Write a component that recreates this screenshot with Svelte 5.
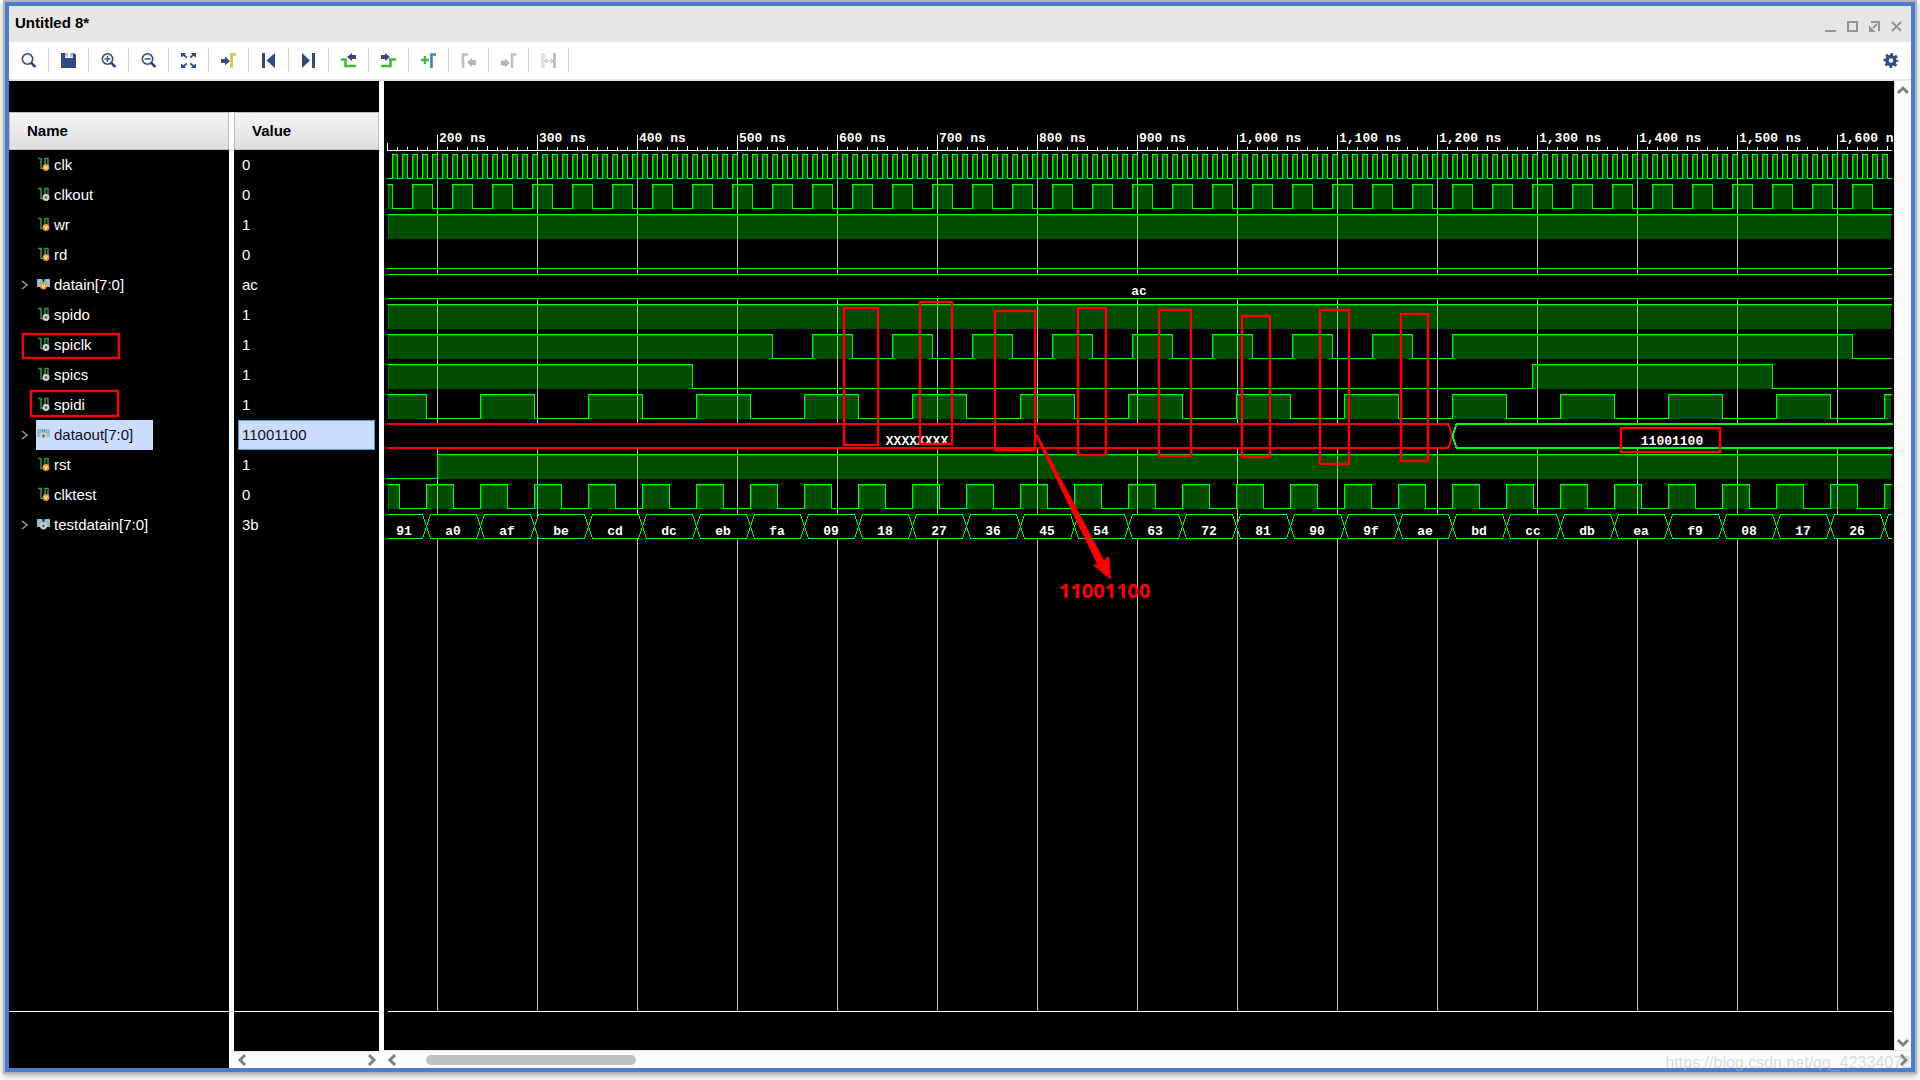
<script lang="ts">
	type Span = [number, number];

	interface Segment {
		from: number;
		to: number;
		label: string;
		labelAt?: number;
		undefinedValue?: boolean;
	}

	interface Signal {
		name: string;
		value: string;
		kind: 'input' | 'output';
		high?: Span[];
		bus?: Segment[];
		bold?: boolean;
		selected?: boolean;
	}

	interface Tool {
		id: string;
		label: string;
		disabled?: boolean;
	}

	// time axis: one pixel per nanosecond
	const START = 150;
	const STOP = 4000;
	const INSET = 3;
	const RULER_Y = 69;
	const ROW_H = 30;
	const WAVE_H = 24;

	const busValues = [
		'91', 'a0', 'af', 'be', 'cd', 'dc', 'eb', 'fa', '09', '18', '27', '36', '45', '54', '63',
		'72', '81', '90', '9f', 'ae', 'bd', 'cc', 'db', 'ea', 'f9', '08', '17', '26', ''
	];

	const tools: Tool[] = [
		{ id: 'search', label: 'Search' },
		{ id: 'save', label: 'Save waveform' },
		{ id: 'zoom-in', label: 'Zoom in' },
		{ id: 'zoom-out', label: 'Zoom out' },
		{ id: 'fit', label: 'Zoom fit' },
		{ id: 'cursor', label: 'Go to cursor' },
		{ id: 'first', label: 'Go to time 0' },
		{ id: 'last', label: 'Go to last time' },
		{ id: 'prev', label: 'Previous transition' },
		{ id: 'next', label: 'Next transition' },
		{ id: 'add', label: 'Add marker' },
		{ id: 'prev-marker', label: 'Previous marker', disabled: true },
		{ id: 'next-marker', label: 'Next marker', disabled: true },
		{ id: 'swap', label: 'Swap cursors', disabled: true }
	];

	function clock(first: number, period: number, width: number, until = STOP): Span[] {
		const spans: Span[] = [];
		for (let t = first; t < until; t += period) spans.push([t, t + width]);
		return spans;
	}

	const signals: Signal[] = [
		{ name: 'clk', value: '0', kind: 'input', high: clock(155, 10, 5) },
		{ name: 'clkout', value: '0', kind: 'output', high: clock(135, 40, 20) },
		{ name: 'wr', value: '1', kind: 'input', high: [[0, STOP]] },
		{ name: 'rd', value: '0', kind: 'input', high: [] },
		{ name: 'datain[7:0]', value: 'ac', kind: 'input', bus: [{ from: 0, to: STOP, label: 'ac', labelAt: 902 }] },
		{ name: 'spido', value: '1', kind: 'output', high: [[0, STOP]] },
		{ name: 'spiclk', value: '1', kind: 'output', high: [[0, 535], ...clock(575, 80, 40, 1200), [1215, 1615]] },
		{ name: 'spics', value: '1', kind: 'output', high: [[0, 455], [1295, 1535]] },
		{ name: 'spidi', value: '1', kind: 'output', high: clock(135, 108, 54) },
		{
			name: 'dataout[7:0]',
			value: '11001100',
			kind: 'output',
			bold: true,
			selected: true,
			bus: [
				{ from: 0, to: 1215, label: 'XXXXXXXX', labelAt: 680, undefinedValue: true },
				{ from: 1215, to: STOP, label: '11001100', labelAt: 1435 }
			]
		},
		{ name: 'rst', value: '1', kind: 'input', high: [[200, STOP]] },
		{ name: 'clktest', value: '0', kind: 'input', high: clock(135, 54, 27) },
		{
			name: 'testdatain[7:0]',
			value: '3b',
			kind: 'output',
			bus: busValues.map((label, i) => ({
				from: 135 + i * 54,
				to: 189 + i * 54,
				label,
				labelAt: i === 0 ? 167 : 162 + i * 54
			}))
		}
	];

	let width = $state(1510);
	let height = $state(969);

	const endX = $derived(width - 3);
	const floorY = $derived(height - 39);
	const ticks = $derived(
		Array.from({ length: Math.floor((endX - INSET) / 10) + 1 }, (_, i) => START + i * 10)
	);
	const majors = $derived(ticks.filter((t) => t % 100 === 0));

	const xOf = (t: number) => Math.min(Math.max(t - START + INSET, INSET), endX);
	const topOf = (row: number) => RULER_Y + 4 + row * ROW_H;

	function visible(spans: Span[]): Span[] {
		return spans
			.map(([a, b]): Span => [xOf(a), xOf(b)])
			.filter(([a, b]) => b > a);
	}

	function tracePath(spans: Span[], row: number): string {
		const hi = topOf(row);
		const lo = hi + WAVE_H;
		let d = '';
		let x = INSET;
		for (const [a, b] of visible(spans)) {
			if (a > x) d += `M${x} ${lo}H${a}V${hi}`;
			else d += `M${a} ${hi}`;
			d += `H${b}`;
			if (b < endX) d += `V${lo}`;
			x = b;
		}
		if (x < endX) d += `M${x} ${lo}H${endX}`;
		return d;
	}

	function busPath(seg: Segment, row: number): string {
		const hi = topOf(row);
		const lo = hi + WAVE_H;
		const mid = hi + WAVE_H / 2;
		const a = xOf(seg.from);
		const b = xOf(seg.to);
		const left = a > INSET ? `M${a + 4} ${lo}L${a} ${mid}L${a + 4} ${hi}` : `M${a} ${hi}`;
		if (b < endX) return `${left}H${b - 4}L${b} ${mid}L${b - 4} ${lo}H${a > INSET ? a + 4 : a}`;
		return `${left}H${b}M${b} ${lo}H${a > INSET ? a + 4 : a}`;
	}

	function busMask(seg: Segment, row: number): string {
		const hi = topOf(row);
		const lo = hi + WAVE_H;
		const mid = hi + WAVE_H / 2;
		const a = xOf(seg.from);
		const b = xOf(seg.to);
		return `${a},${mid} ${a + 4},${hi} ${b - 4},${hi} ${b},${mid} ${b - 4},${lo} ${a + 4},${lo}`;
	}

	const sampleMarks = [
		{ x: 460, y: 227, w: 34, h: 137 },
		{ x: 536, y: 221, w: 32, h: 142 },
		{ x: 611, y: 230, w: 40, h: 139 },
		{ x: 694, y: 227, w: 28, h: 147 },
		{ x: 775, y: 229, w: 32, h: 146 },
		{ x: 858, y: 235, w: 28, h: 141 },
		{ x: 936, y: 229, w: 29, h: 154 },
		{ x: 1017, y: 233, w: 27, h: 147 },
		{ x: 1237, y: 347, w: 99, h: 24 }
	];
</script>

{#snippet toolIcon(id: string)}
	<svg class="icon" viewBox="0 0 16 16" fill="none">
		{#if id === 'search' || id === 'zoom-in' || id === 'zoom-out'}
			<circle cx="6.500" cy="7" r="5.200" stroke="#2f4b82" stroke-width="1.600" />
			<path d="M10.200 10.800l4.200 4.200" stroke="#2f4b82" stroke-width="2.600" />
			{#if id !== 'search'}
				<path d="M3.500 7h6" stroke="#2f4b82" stroke-width="1.400" />
			{/if}
			{#if id === 'zoom-in'}
				<path d="M6.500 4v6" stroke="#2f4b82" stroke-width="1.400" />
			{/if}
		{:else if id === 'save'}
			<path d="M0 1h4v5h8V1h1l2 2v13H0z" fill="#2f4b82" />
			<path d="M4 1h3v4H4zM9 1h3v4H9z" fill="#b9c3d6" />
		{:else if id === 'fit'}
			<path d="M0 1h5L3.700 2.400l2.600 2.600-1.300 1.300-2.600-2.600L1 5H0zM15 1h-5l1.300 1.400L8.700 5 10 6.300l2.600-2.600L14 5h1zM0 16h5l-1.300-1.400 2.600-2.600L5 10.700l-2.600 2.600L1 12H0zM15 16h-5l1.300-1.400L8.700 12l1.300-1.300 2.600 2.600L14 12h1z" fill="#2f4b82" />
		{:else if id === 'cursor'}
			<path d="M0 7h4V4.500L9 9l-5 4.500V11H0z" fill="#2f4b82" />
			<path d="M10.500 16V2.500H15" stroke="#e0c35a" stroke-width="3" />
		{:else if id === 'first'}
			<path d="M1 1h3v15H1zM14 1v15L5.500 8.500z" fill="#2f4b82" />
		{:else if id === 'last'}
			<path d="M11 1h3v15h-3zM1 1v15l8-7.500z" fill="#2f4b82" />
		{:else if id === 'prev'}
			<path d="M0 7.500h4.500v6.500H15" stroke="#48b53c" stroke-width="2.600" />
			<path d="M15 3h-4V1L6 5l5 4V7h4z" fill="#2f4b82" />
		{:else if id === 'next'}
			<path d="M0 14h9.500V7.500H15" stroke="#48b53c" stroke-width="2.600" />
			<path d="M0 3h4V1l5 4-5 4V7H0z" fill="#2f4b82" />
		{:else if id === 'add'}
			<path d="M0 8h8M4 4v8" stroke="#48b53c" stroke-width="2.400" />
			<path d="M10.500 16V2.500H15" stroke="#3b86b8" stroke-width="2.600" />
		{:else if id === 'prev-marker'}
			<path d="M2 16V2.500h5" stroke="#c0c0c0" stroke-width="2.600" />
			<path d="M15 8h-4V6l-5 4.500 5 4.500v-2h4z" fill="#b4b4b4" />
		{:else if id === 'next-marker'}
			<path d="M0 8.500h4v-2L9 11l-5 4.500v-2H0z" fill="#b4b4b4" />
			<path d="M11 16V2.500h4.500" stroke="#c0c0c0" stroke-width="2.600" />
		{:else if id === 'swap'}
			<path d="M1 2h2v13H1z" stroke="#c0c0c0" />
			<path d="M12 1h3v15h-3z" fill="#c0c0c0" />
			<path d="M4 9h8M6.500 6.500L4 9l2.500 2.500M9.500 6.500L12 9l-2.500 2.500" stroke="#b4b4b4" />
		{/if}
	</svg>
{/snippet}

{#snippet badge(kind: string, x: number, y: number)}
	{#if kind === 'input'}
		<circle cx={x} cy={y} r="3.400" fill="#f39424" />
		<path d="M{x - 1.5} {y - 1.5}l1.500 3 1.500-3" fill="none" stroke="#fff" />
	{:else}
		<circle cx={x} cy={y} r="3.400" fill="#d2d2d2" />
		<circle cx={x} cy={y} r="1.400" fill="#666" />
	{/if}
{/snippet}

{#snippet chevron(d: string)}
	<svg class="chevron" viewBox="0 0 14 14" fill="none" stroke="#808080" stroke-width="3">
		<path {d} />
	</svg>
{/snippet}

<div class="window">
	<header class="titlebar">
		<h1>Untitled 8*</h1>
		<div class="window-controls">
			<button type="button" aria-label="Minimize">
				<svg viewBox="0 0 12 12"><path d="M0 10h11" /></svg>
			</button>
			<button type="button" aria-label="Maximize">
				<svg viewBox="0 0 12 12"><path d="M1 1h9v9H1z" /></svg>
			</button>
			<button type="button" aria-label="Float">
				<svg viewBox="0 0 12 12"><path d="M2 1h8v9M8 3L4 7" /><path class="solid" d="M0 4.500V11h6.500z" /></svg>
			</button>
			<button type="button" aria-label="Close">
				<svg viewBox="0 0 12 12"><path d="M1 1l9 9M10 1l-9 9" /></svg>
			</button>
		</div>
	</header>

	<div class="toolbar">
		{#each tools as tool (tool.id)}
			<button type="button" class="tool" aria-label={tool.label} disabled={tool.disabled}>
				{@render toolIcon(tool.id)}
			</button>
		{/each}
		<button type="button" class="tool settings" aria-label="Settings">
			<svg class="icon" viewBox="0 0 16 16" fill="none" stroke="#2f4b82">
				<circle cx="8" cy="8.500" r="4" stroke-width="3.400" />
				<circle cx="8" cy="8.500" r="6.300" stroke-width="2.400" stroke-dasharray="2.600 2.348" stroke-dashoffset="1.300" />
			</svg>
		</button>
	</div>

	<main class="workspace">
		<section class="objects">
			<div class="strip"></div>
			<table>
				<thead>
					<tr>
						<th class="name-col" scope="col">Name</th>
						<th scope="col">Value</th>
					</tr>
				</thead>
				<tbody>
					{#each signals as signal (signal.name)}
						<tr class:selected={signal.selected}>
							<td class="name-col">
								<div class="name-cell">
									<span class="expander">
										{#if signal.bus}
											<button type="button" aria-label="Expand {signal.name}">
												<svg viewBox="0 0 8 10" fill="none" stroke="#9a9a9a" stroke-width="1.600">
													<path d="M1 1l5 4-5 4" />
												</svg>
											</button>
										{/if}
									</span>
									<span class="signal">
										<svg class="signal-icon" viewBox="0 0 13 14">
											{#if signal.bus}
												<path d="M0 2h5l1.500 4L8 2h5v8h-3L6.500 12 3 10H0z" fill="#94bdd2" />
												<path d="M5 2l1.500 4L8 2" fill="none" stroke="#5f7f8e" />
												{@render badge(signal.kind, 6.5, 9)}
											{:else}
												<path d="M1 1.500h3v10h4v-10h3v7" fill="none" stroke="#2e9a45" stroke-width="1.500" />
												{@render badge(signal.kind, 9, 10.5)}
											{/if}
										</svg>
										{signal.name}
									</span>
								</div>
							</td>
							<td><div class="value-cell">{signal.value}</div></td>
						</tr>
					{/each}
				</tbody>
			</table>
			<div class="below">
				<div class="below-name"><div class="void"></div><div class="void-foot"></div></div>
				<div class="below-value">
					<div class="void"></div>
					<div class="void-foot"></div>
					<div class="scrollbar">
						<button type="button" aria-label="Scroll values left">{@render chevron('M9 2L4 7l5 5')}</button>
						<button type="button" aria-label="Scroll values right">{@render chevron('M6 2l5 5-5 5')}</button>
					</div>
				</div>
			</div>
			<svg class="overlay" aria-hidden="true">
				<rect class="mark" x="14" y="253" width="96" height="24" />
				<rect class="mark" x="22" y="310" width="87" height="25" />
			</svg>
		</section>

		<section class="waves">
			<div class="plot" bind:clientWidth={width} bind:clientHeight={height}>
				<svg class="canvas">
					<g class="crisp" transform="translate(0.5 0.5)">
						{#each majors as t (t)}
							<path class="grid" d="M{xOf(t)} {RULER_Y + 1}V{floorY}" />
						{/each}

						{#each ticks as t (t)}
							<path
								class="ruler"
								d="M{xOf(t)} {RULER_Y}V{t % 100 === 0 ? RULER_Y - 16 : t === START ? RULER_Y - 8 : t % 50 === 0 ? RULER_Y - 5 : RULER_Y - 4}"
							/>
						{/each}
						<path class="ruler" d="M{INSET} {RULER_Y}H{endX}" />
						<path class="ruler" d="M{INSET} {floorY}H{endX}" />

						{#each signals as signal, row (signal.name)}
							{#if signal.high}
								{#each visible(signal.high) as [a, b] (a)}
									<rect class="fill" x={a + 0.5} y={topOf(row) + 0.5} width={b - a - 1} height={WAVE_H} />
									<path class="shade" d="M{a + 1} {topOf(row) + WAVE_H}V{topOf(row) + 1}H{b}" />
								{/each}
								<path class="trace" d={tracePath(signal.high, row)} />
							{:else if signal.bus}
								<g transform={signal.bold ? 'translate(0 -0.5)' : undefined}>
									{#each signal.bus as seg (seg.from)}
										{#if xOf(seg.from) < endX}
											<polygon class="bus-mask" points={busMask(seg, row)} />
											<path
												class="trace"
												class:bold={signal.bold}
												class:undefined-value={seg.undefinedValue}
												d={busPath(seg, row)}
											/>
										{/if}
									{/each}
								</g>
							{/if}
						{/each}
					</g>

					{#each majors as t (t)}
						<text class="label" x={xOf(t) + 2} y={RULER_Y - 8}>{t.toLocaleString('en-US')} ns</text>
					{/each}
					{#each signals as signal, row (signal.name)}
						{#each signal.bus ?? [] as seg (seg.from)}
							<text class="label centered" x={xOf(seg.labelAt ?? seg.from)} y={topOf(row) + 21}>{seg.label}</text>
						{/each}
					{/each}

					{#each sampleMarks as mark (mark.x)}
						<rect class="mark" x={mark.x} y={mark.y} width={mark.w} height={mark.h} />
					{/each}
					<polygon class="arrow" points="652,353 654,354 720,479 725,475 727,499 709,484 713,483 652,356" />
					<text class="note" x="675" y="517">11001100</text>
				</svg>
			</div>
			<div class="scrollbar vertical">
				<button type="button" aria-label="Scroll up">{@render chevron('M2 10l5-5 5 5')}</button>
				<button type="button" aria-label="Scroll down">{@render chevron('M2 6l5 5 5-5')}</button>
			</div>
			<div class="scrollbar horizontal">
				<button type="button" aria-label="Scroll left">{@render chevron('M9 2L4 7l5 5')}</button>
				<div class="track"><div class="thumb"></div></div>
				<button type="button" aria-label="Scroll right">{@render chevron('M4 2l5 5-5 5')}</button>
			</div>
		</section>
	</main>
	<span class="watermark">https://blog.csdn.net/qq_42334072</span>
</div>

<style>
	:global(body) {
		margin: 0;
		background: #fff;
	}

	.window {
		position: relative;
		box-sizing: border-box;
		display: flex;
		flex-direction: column;
		height: calc(100vh - 10px);
		min-height: 640px;
		margin: 2px 5px 8px;
		border: 4px solid #4a7dce;
		box-shadow:
			0 0 0 2px #b4b4b4,
			0 2px 6px 2px rgba(0, 0, 0, 0.3);
		background: #fff;
		font-family: 'Liberation Sans', Arial, sans-serif;
		font-size: 15px;
		color: #000;
	}

	button {
		display: flex;
		align-items: center;
		justify-content: center;
		margin: 0;
		padding: 0;
		border: none;
		background: none;
	}

	.titlebar {
		display: flex;
		align-items: center;
		justify-content: space-between;
		height: 36px;
		padding: 0 8px 0 6px;
		background: #e6e6e6;
	}

	h1 {
		margin: 0 0 2px;
		font-size: 15px;
		line-height: 18px;
		font-weight: bold;
	}

	.window-controls {
		display: flex;
		gap: 10px;
		padding-top: 5px;
	}

	.window-controls svg {
		display: block;
		width: 12px;
		height: 12px;
		fill: none;
		stroke: #949494;
		stroke-width: 2;
	}

	.window-controls .solid {
		fill: #949494;
		stroke: none;
	}

	.toolbar {
		display: flex;
		align-items: center;
		height: 36px;
		padding-bottom: 1px;
		border-bottom: 2px solid #e6e6e6;
	}

	.tool {
		box-sizing: border-box;
		justify-content: flex-start;
		width: 40px;
		height: 24px;
		padding-left: 12px;
		border-right: 1px solid #d2d2d2;
	}

	.settings {
		margin-left: auto;
		border-right: none;
	}

	.icon {
		width: 16px;
		height: 16px;
	}

	.workspace {
		display: flex;
		flex: 1;
		gap: 5px;
		min-height: 0;
	}

	.objects {
		position: relative;
		display: flex;
		flex-direction: column;
		flex: none;
		width: 370px;
	}

	.strip {
		height: 31px;
		background: #000;
	}

	table {
		width: 100%;
		table-layout: fixed;
		border-collapse: separate;
		border-spacing: 0;
	}

	th {
		box-sizing: border-box;
		height: 38px;
		padding: 0 17px 2px;
		border: 1px solid #bdbdbd;
		background: linear-gradient(#f4f4f4, #dfdfe1);
		font-weight: bold;
		text-align: left;
	}

	td {
		height: 30px;
		padding: 0;
		background: #000;
		color: #fff;
	}

	th.name-col {
		width: 225px;
		box-shadow: inset -1px 0 #bdbdbd;
	}

	.name-col {
		border-right: 5px solid #fff;
	}

	.name-cell,
	.expander,
	.signal {
		display: flex;
		align-items: center;
		box-sizing: border-box;
		height: 30px;
	}

	.expander {
		justify-content: center;
		width: 27px;
		padding-left: 4px;
	}

	.expander svg {
		width: 8px;
		height: 10px;
	}

	.signal {
		gap: 4px;
		padding: 0 20px 2px 1px;
	}

	.signal-icon {
		width: 13px;
		height: 14px;
	}

	.value-cell {
		box-sizing: border-box;
		height: 30px;
		margin: 0 4px;
		padding: 0 3px;
		border: 1px solid transparent;
		line-height: 28px;
	}

	.selected .signal,
	.selected .value-cell {
		background: #cbddff;
		color: #111;
	}

	.selected .value-cell {
		border-color: #4a9bd6;
	}

	.below {
		display: flex;
		flex: 1;
		gap: 5px;
	}

	.below-name,
	.below-value {
		display: flex;
		flex-direction: column;
	}

	.below-name {
		width: 220px;
	}

	.below-name .void-foot {
		height: 56px;
	}

	.below-value {
		flex: 1;
	}

	.void {
		flex: 1;
		background: #000;
		border-bottom: 1px solid #fff;
	}

	.void-foot {
		height: 39px;
		background: #000;
	}

	.scrollbar {
		display: flex;
		align-items: center;
		justify-content: space-between;
		box-sizing: border-box;
		height: 17px;
		padding: 0 2px;
		border-top: 1px solid #e4e4e4;
		background: #fbfbfb;
	}

	.chevron {
		display: block;
		width: 14px;
		height: 14px;
	}

	.overlay {
		position: absolute;
		inset: 0;
		width: 100%;
		height: 100%;
		pointer-events: none;
	}

	.waves {
		display: grid;
		grid-template-columns: 1fr 17px;
		grid-template-rows: 1fr 18px;
		flex: 1;
		min-width: 0;
	}

	.plot {
		min-width: 0;
		min-height: 0;
		overflow: hidden;
		background: #000;
	}

	.canvas {
		display: block;
		width: 100%;
		height: 100%;
	}

	.crisp {
		shape-rendering: crispEdges;
	}

	.grid,
	.ruler,
	.trace,
	.shade {
		fill: none;
		stroke-width: 1px;
	}

	.grid {
		stroke: #c0c0c0;
	}

	.ruler {
		stroke: #fff;
	}

	.fill {
		fill: #00ff00;
		fill-opacity: 0.3;
	}

	.shade {
		stroke: #008000;
		stroke-opacity: 0.8;
	}

	.trace {
		stroke: #00ff00;
		stroke-linecap: square;
	}

	.trace.bold {
		stroke-width: 2px;
	}

	.trace.undefined-value {
		stroke: #ff0000;
	}

	.bus-mask {
		fill: #000;
	}

	.label {
		fill: #fff;
		font-family: 'Liberation Mono', monospace;
		font-size: 13px;
		font-weight: bold;
	}

	.centered {
		text-anchor: middle;
	}

	.mark {
		fill: none;
		stroke: #ff0000;
		stroke-width: 2px;
		filter: drop-shadow(0 0 1px rgba(255, 0, 0, 0.6));
	}

	.arrow {
		fill: #ff0000;
	}

	.note {
		fill: #ff0000;
		font-family: 'Open Sans', 'Noto Sans', sans-serif;
		font-size: 20px;
		font-weight: bold;
	}

	.vertical {
		flex-direction: column;
		height: auto;
		padding: 2px 0;
		border-top: none;
		border-left: 1px solid #e4e4e4;
	}

	.horizontal {
		grid-column: 1 / -1;
		height: 18px;
		padding: 0 0 0 2px;
	}

	.track {
		flex: 1;
		padding: 0 26px;
	}

	.thumb {
		width: 210px;
		height: 10px;
		border-radius: 5px;
		background: #c1c1c1;
	}

	.watermark {
		position: absolute;
		right: 0;
		bottom: -3px;
		color: rgba(190, 190, 190, 0.55);
		font-size: 16px;
		line-height: 16px;
		pointer-events: none;
	}
</style>
